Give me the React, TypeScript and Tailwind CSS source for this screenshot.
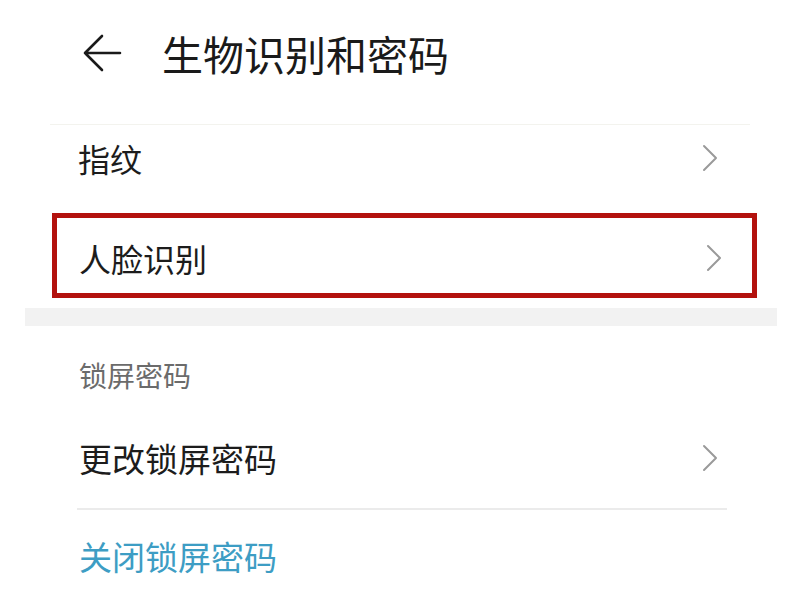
import React from 'react';

const Chevron: React.FC = () => (
  <svg className="w-[16px] h-[28px] text-[#9a9a9a]" viewBox="0 0 16 28" fill="none" stroke="currentColor">
    <path d="M2 2l12 12L2 26" strokeWidth={2} strokeLinecap="round" strokeLinejoin="round" />
  </svg>
);

const App: React.FC = () => {
  return (
    <div
      className="w-[800px] h-[592px] bg-white overflow-hidden"
      style={{ fontFamily: '"Noto Sans CJK SC", "Noto Sans", sans-serif' }}
    >
      {/* header */}
      <div className="h-[106px] flex items-center pl-[82px]">
        <svg className="w-[40px] h-[38px] text-[#1a1a1a]" viewBox="0 0 40 38" fill="none" stroke="currentColor">
          <path d="M38 19H3M20 2L3 19l17 17" strokeWidth={2.6} strokeLinecap="round" strokeLinejoin="round" />
        </svg>
        <h1 className="ml-[40px] text-[41px] leading-none text-[#1a1a1a]">生物识别和密码</h1>
      </div>
      <div className="mt-[18px] mx-[50px] h-px bg-[#f3f3ee]" />

      {/* fingerprint */}
      <div className="h-[88px] flex items-center justify-between pl-[78px] pr-[82px] pb-[22px]">
        <span className="text-[32px] leading-none text-[#1c1c1c]">指纹</span>
        <Chevron />
      </div>

      {/* face recognition (highlighted) */}
      <div className="ml-[52px] mr-[43px] h-[85px] border-[5px] border-[#b3120e] flex items-center justify-between pl-[22px] pr-[30px] pt-[4px]">
        <span className="text-[32px] leading-none text-[#1c1c1c]">人脸识别</span>
        <Chevron />
      </div>

      <div className="mt-[10px] ml-[25px] mr-[23px] h-[18px] bg-[#f2f2f2]" />

      {/* lock screen password */}
      <div className="h-[96px] flex items-center pl-[79px] pt-[2px]">
        <span className="text-[28px] leading-none text-[#6b6b6b]">锁屏密码</span>
      </div>
      <div className="h-[72px] flex items-center justify-between pl-[79px] pr-[82px]">
        <span className="text-[33px] leading-none text-[#1c1c1c]">更改锁屏密码</span>
        <Chevron />
      </div>
      <div className="mt-[14px] ml-[77px] mr-[73px] h-[2px] bg-[#ebebeb]" />
      <div className="mt-[30px] pl-[79px]">
        <span className="block text-[33px] leading-none text-[#3d9dc4]">关闭锁屏密码</span>
      </div>
    </div>
  );
};

export default App;
